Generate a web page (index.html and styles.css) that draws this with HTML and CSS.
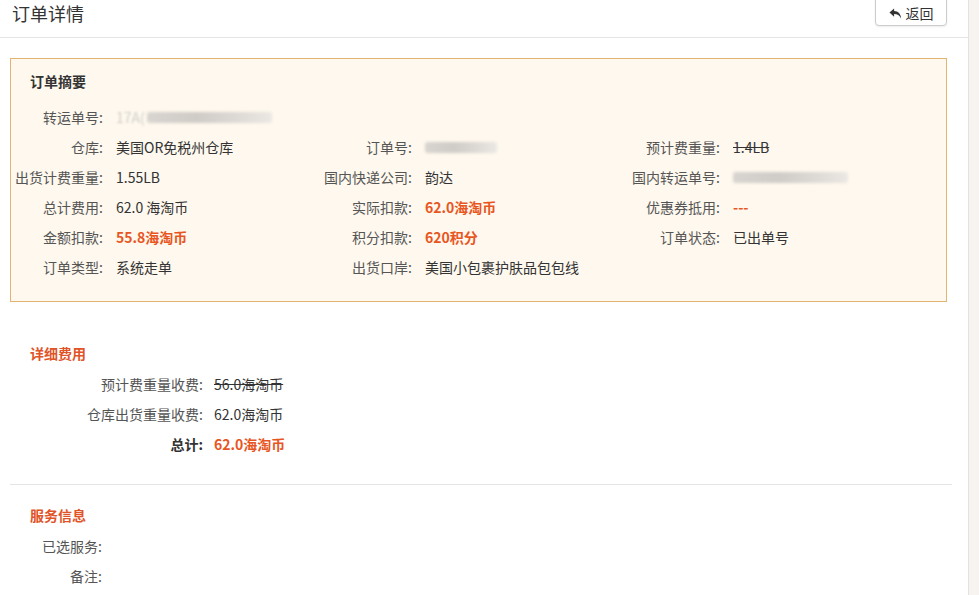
FILE: index.html
```html
<!DOCTYPE html>
<html lang="zh-CN">
<head>
<meta charset="utf-8">
<title>订单详情</title>
<link rel="stylesheet" href="styles.css">
</head>
<body>
<div class="page">
  <div class="main">
    <div class="header">
      <h1 class="title">订单详情</h1>
      <button class="btn-back">
        <svg class="icon-reply" viewBox="0 0 14 14" width="13" height="13"><path d="M5.5 1.5 L0.5 6 L5.5 10.5 L5.5 7.6 C9 7.6 11.5 8.8 13 12.5 C12.8 7.5 10 4.6 5.5 4.4 Z" fill="#333"/></svg>
        <span>返回</span>
      </button>
    </div>
    <div class="content">
      <div class="summary">
        <div class="summary-title">订单摘要</div>
        <div class="grid">
          <div class="cell"><span class="lbl">转运单号:</span><span class="val"><span class="peek">17A(</span><span class="blur w160"></span></span></div>
          <div class="cell"></div>
          <div class="cell"></div>

          <div class="cell"><span class="lbl">仓库:</span><span class="val">美国OR免税州仓库</span></div>
          <div class="cell"><span class="lbl">订单号:</span><span class="val"><span class="blur w75"></span></span></div>
          <div class="cell"><span class="lbl">预计费重量:</span><span class="val strike">1.4LB</span></div>

          <div class="cell"><span class="lbl">出货计费重量:</span><span class="val">1.55LB</span></div>
          <div class="cell"><span class="lbl">国内快递公司:</span><span class="val">韵达</span></div>
          <div class="cell"><span class="lbl">国内转运单号:</span><span class="val"><span class="blur w115"></span></span></div>

          <div class="cell"><span class="lbl">总计费用:</span><span class="val">62.0 海淘币</span></div>
          <div class="cell"><span class="lbl">实际扣款:</span><span class="val hl">62.0海淘币</span></div>
          <div class="cell"><span class="lbl">优惠券抵用:</span><span class="val hl">---</span></div>

          <div class="cell"><span class="lbl">金额扣款:</span><span class="val hl">55.8海淘币</span></div>
          <div class="cell"><span class="lbl">积分扣款:</span><span class="val hl">620积分</span></div>
          <div class="cell"><span class="lbl">订单状态:</span><span class="val">已出单号</span></div>

          <div class="cell"><span class="lbl">订单类型:</span><span class="val">系统走单</span></div>
          <div class="cell"><span class="lbl">出货口岸:</span><span class="val">美国小包裹护肤品包包线</span></div>
          <div class="cell"></div>
        </div>
      </div>

      <div class="section fees">
        <div class="section-title">详细费用</div>
        <div class="row"><span class="lbl wide">预计费重量收费:</span><span class="val strike">56.0海淘币</span></div>
        <div class="row"><span class="lbl wide">仓库出货重量收费:</span><span class="val">62.0海淘币</span></div>
        <div class="row"><span class="lbl wide strong">总计:</span><span class="val hl">62.0海淘币</span></div>
      </div>

      <div class="divider"></div>

      <div class="section service">
        <div class="section-title">服务信息</div>
        <div class="row"><span class="lbl">已选服务:</span><span class="val"></span></div>
        <div class="row"><span class="lbl">备注:</span><span class="val"></span></div>
      </div>
    </div>
  </div>
  <div class="scrollbar"></div>
</div>
</body>
</html>
```

FILE: styles.css
```css
html, body {
  margin: 0;
  padding: 0;
  background: #fff;
  height: 100%;
  overflow: hidden;
}
body {
  font-family: "Noto Sans CJK SC", "Liberation Sans", sans-serif;
  font-size: 14px;
  color: #333;
}
.page {
  display: flex;
  height: 595px;
}
.main {
  width: 968px;
  flex: none;
}
.scrollbar {
  flex: 1;
  background: #f6f3f0;
  border-left: 1px solid #e4e0dc;
}
.header {
  height: 37px;
  border-bottom: 1px solid #e5e5e5;
  display: flex;
  justify-content: space-between;
  align-items: flex-start;
  padding: 0 21px 0 12px;
}
.title {
  margin: 0;
  font-size: 18px;
  font-weight: normal;
  line-height: 24px;
  padding-top: 1px;
  color: #333;
}
.btn-back {
  margin-top: -6px;
  height: 32px;
  width: 72px;
  border: 1px solid #ccc;
  border-radius: 4px;
  background: #fff;
  box-shadow: 0 1px 2px rgba(0,0,0,0.08);
  display: flex;
  align-items: center;
  justify-content: center;
  gap: 4px;
  padding: 6px 0 0 0;
  font-family: inherit;
  font-size: 14px;
  color: #333;
}
.icon-reply {
  display: block;
}
.content {
  padding: 20px 21px 0 10px;
}
.summary {
  background: #fef8ee;
  border: 1px solid #e2b572;
  padding: 12px 0 19px 0;
}
.summary-title {
  font-weight: bold;
  line-height: 20px;
  padding-left: 19px;
  color: #333;
}
.grid {
  margin-top: 11px;
  display: grid;
  grid-template-columns: 309px 308px 1fr;
  grid-auto-rows: 30px;
}
.cell {
  display: flex;
  align-items: center;
}
.lbl {
  width: 92px;
  flex: none;
  text-align: right;
  color: #555;
  white-space: nowrap;
}
.val {
  margin-left: 13px;
  color: #333;
  white-space: nowrap;
  display: flex;
  align-items: center;
}
.strike {
  text-decoration: line-through;
}
.hl {
  color: #e8561f;
  font-weight: bold;
}
.peek {
  color: #d2cec8;
  filter: blur(1.2px);
}
.blur {
  display: inline-block;
  height: 11px;
  background: linear-gradient(90deg, #d8d4cf 0%, #cfcbc6 40%, #dcd8d3 70%, #ebe7e2 100%);
  filter: blur(1.5px);
  border-radius: 3px;
}
.w160 { width: 125px; margin-left: 2px; }
.w75 { width: 72px; }
.w115 { width: 115px; }

.section-title {
  color: #e05428;
  font-weight: bold;
  line-height: 20px;
  padding-left: 20px;
}
.fees {
  margin-top: 41px;
}
.fees .section-title {
  margin-bottom: 6px;
}
.row {
  height: 30px;
  display: flex;
  align-items: center;
}
.lbl.wide {
  width: 193px;
}
.lbl.strong {
  font-weight: bold;
  color: #333;
}
.fees .val {
  margin-left: 11px;
}
.divider {
  margin-top: 25px;
  height: 1px;
  background: #e5e5e5;
  margin-right: -5px;
}
.service {
  margin-top: 20px;
}
.service .section-title {
  margin-bottom: 6px;
}
```
